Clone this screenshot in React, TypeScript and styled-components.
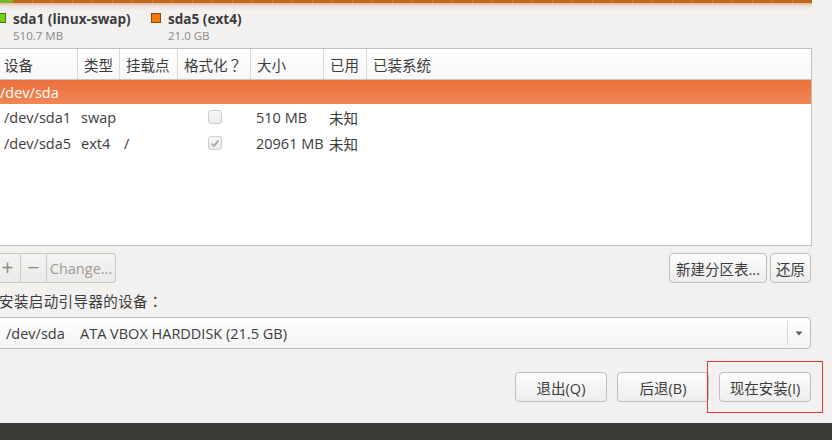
import React from "react";
import styled, { createGlobalStyle, css } from "styled-components";

const Global = createGlobalStyle`
  html, body { margin: 0; padding: 0; background: #f2f1f0; }
  body {
    font-family: "Open Sans", "Noto Sans CJK SC", sans-serif;
    font-size: 14.5px;
    color: #3c3c3c;
  }
  * { box-sizing: border-box; }
`;

const Page = styled.div`
  position: relative;
  width: 832px;
  height: 440px;
  overflow: hidden;
  display: flex;
  flex-direction: column;
  background: #f2f1f0;
`;

const Main = styled.div`
  flex: 1;
  display: flex;
  flex-direction: column;
  margin-left: -3px;
  width: 815px;
`;

const PartitionBar = styled.div`
  height: 11px;
  display: flex;
  width: 815px;
`;

const Segment = styled.div<{ $color: string; $width?: number }>`
  height: 11px;
  ${(p) => (p.$width ? css`width: ${p.$width}px;` : css`flex: 1;`)}
  background:
    repeating-linear-gradient(
      to right,
      transparent 0,
      transparent 19px,
      rgba(255, 255, 255, 0.16) 19px,
      rgba(255, 255, 255, 0.16) 20px
    ),
    linear-gradient(
      to bottom,
      ${(p) => p.$color} 0,
      ${(p) => p.$color} 3px,
      rgba(214, 150, 95, 0.6) 3px,
      rgba(230, 200, 170, 0.35) 6px,
      rgba(242, 241, 240, 0) 11px
    );
`;

const Legend = styled.div`
  height: 37px;
  display: flex;
  margin-left: -1px;
`;

const LegendItem = styled.div<{ $width?: number }>`
  display: flex;
  gap: 7px;
  ${(p) => p.$width && css`width: ${p.$width}px;`}
`;

const Swatch = styled.div<{ $color: string }>`
  width: 10px;
  height: 10px;
  margin-top: 2px;
  background: ${(p) => p.$color};
  border: 1px solid rgba(60, 40, 20, 0.6);
`;

const LegendText = styled.div`
  display: flex;
  flex-direction: column;
`;

const LegendName = styled.span`
  font-weight: 700;
  font-size: 13.6px;
  line-height: 16px;
  color: #3c3c3c;
`;

const LegendSize = styled.span`
  font-size: 11.5px;
  line-height: 18px;
  color: #8a8886;
`;

const Punct = styled.span`
  font-family: "Noto Sans CJK JP", "Noto Sans CJK SC", sans-serif;
`;

const Table = styled.div`
  height: 198px;
  background: #fff;
  border: 1px solid #c3c0bc;
  display: flex;
  flex-direction: column;
`;

const cols = "80px 42px 58px 73px 73px 43px 1fr";

const HeaderRow = styled.div`
  display: grid;
  grid-template-columns: ${cols};
  height: 31px;
  background: linear-gradient(to bottom, #ffffff, #f7f7f7);
  border-bottom: 1px solid #c8c5c1;
`;

const HeaderCell = styled.div<{ $last?: boolean }>`
  display: flex;
  align-items: center;
  padding-left: 6px;
  color: #3c3c3c;
  white-space: nowrap;
  overflow: hidden;
  border-right: ${(p) => (p.$last ? "none" : "1px solid #dcd9d5")};
`;

const DiskRow = styled.div`
  height: 24px;
  display: flex;
  align-items: center;
  padding-left: 2px;
  color: #fff;
  background: linear-gradient(to bottom, #e9703b, #f18655);
`;

const Row = styled.div`
  display: grid;
  grid-template-columns: ${cols};
  height: 26px;
  align-items: center;
`;

const Cell = styled.div<{ $pad?: number; $center?: boolean }>`
  padding-left: ${(p) => p.$pad ?? 5}px;
  color: #3c3c3c;
  white-space: nowrap;
  ${(p) =>
    p.$center &&
    css`
      display: flex;
      justify-content: center;
      padding-left: 1px;
    `}
`;

const CheckBox = styled.div`
  width: 14px;
  height: 14px;
  border: 1px solid #cfcdca;
  border-radius: 3px;
  background: linear-gradient(to bottom, #f7f7f7, #ebebeb);
  display: flex;
  align-items: center;
  justify-content: center;
`;

const ToolRow = styled.div`
  display: flex;
  align-items: center;
  margin-top: 7px;
  height: 30px;
`;

const Group = styled.div`
  display: flex;
  margin-left: -3px;
`;

const buttonBase = css`
  height: 30px;
  display: flex;
  align-items: center;
  justify-content: center;
  border: 1px solid #c2bfbb;
  border-radius: 4px;
  background: linear-gradient(to bottom, #fcfcfc, #ededed);
  font-family: inherit;
  color: #3c3c3c;
  padding: 0;
  white-space: nowrap;
`;

const GroupButton = styled.div<{ $width: number; $pos: "first" | "mid" | "last"; $big?: boolean }>`
  ${buttonBase}
  width: ${(p) => p.$width}px;
  color: #9d9b98;
  background: linear-gradient(to bottom, #f5f4f3, #eceae8);
  border-color: #cdcac6;
  border-radius: ${(p) =>
    p.$pos === "first" ? "4px 0 0 4px" : p.$pos === "last" ? "0 4px 4px 0" : "0"};
  ${(p) => p.$pos !== "first" && css`border-left: none;`}
  ${(p) =>
    p.$big &&
    css`
      font-size: 21px;
      color: #8e8c89;
      padding-bottom: 2px;
    `}
`;

const Spacer = styled.div`
  flex: 1;
`;

const Button = styled.div<{ $width: number }>`
  ${buttonBase}
  width: ${(p) => p.$width}px;
`;

const RightGroup = styled.div`
  display: flex;
  gap: 3px;
  margin-right: 1px;
`;

const Label = styled.div`
  margin-top: 9px;
  height: 18px;
  line-height: 18px;
  padding-left: 2px;
  color: #3c3c3c;
  letter-spacing: 0.4px;
`;

const Combo = styled.div`
  margin-top: 7px;
  margin-right: 1px;
  height: 32px;
  display: flex;
  align-items: center;
  border: 1px solid #bfbbb6;
  border-radius: 4px;
  background: linear-gradient(to bottom, #ffffff, #f3f3f3);
  padding-left: 8px;
`;

const DevName = styled.span`
  width: 74px;
`;

const DiskName = styled.span`
  flex: 1;
`;

const ComboArrow = styled.div`
  width: 22px;
  height: 24px;
  border-left: 1px solid #dad7d3;
  display: flex;
  align-items: center;
  justify-content: center;
  margin-right: 1px;
`;

const BottomRow = styled.div`
  margin-top: 23px;
  display: flex;
  justify-content: flex-end;
  gap: 10px;
  margin-right: 1px;
`;

const DarkBar = styled.div`
  height: 17px;
  background: #3c3b37;
`;

const Highlight = styled.div`
  position: absolute;
  left: 707px;
  top: 361px;
  width: 116px;
  height: 52px;
  border: 1px solid #e5383c;
`;

const Check = () => (
  <svg width="10" height="9" viewBox="0 0 10 9">
    <path d="M1.5 4.5 L4 7 L8.5 1.5" fill="none" stroke="#a3a3a3" strokeWidth="1.6" />
  </svg>
);

const Arrow = () => (
  <svg width="8" height="5" viewBox="0 0 8 5">
    <path d="M0.5 0.5 L7.5 0.5 L4 4.5 Z" fill="#5a5a5a" />
  </svg>
);

export default function App() {
  return (
    <Page>
      <Global />
      <Main>
        <PartitionBar>
          <Segment $color="#7ab52c" $width={16} />
          <Segment $color="#c0691c" />
        </PartitionBar>
        <Legend>
          <LegendItem $width={155}>
            <Swatch $color="#73d216" />
            <LegendText>
              <LegendName>sda1 (linux-swap)</LegendName>
              <LegendSize>510.7 MB</LegendSize>
            </LegendText>
          </LegendItem>
          <LegendItem>
            <Swatch $color="#f57900" />
            <LegendText>
              <LegendName>sda5 (ext4)</LegendName>
              <LegendSize>21.0 GB</LegendSize>
            </LegendText>
          </LegendItem>
        </Legend>
        <Table>
          <HeaderRow>
            <HeaderCell>设备</HeaderCell>
            <HeaderCell>类型</HeaderCell>
            <HeaderCell>挂载点</HeaderCell>
            <HeaderCell>
              格式化<Punct>？</Punct>
            </HeaderCell>
            <HeaderCell>大小</HeaderCell>
            <HeaderCell>已用</HeaderCell>
            <HeaderCell $last>已装系统</HeaderCell>
          </HeaderRow>
          <DiskRow>/dev/sda</DiskRow>
          <Row>
            <Cell $pad={6}>/dev/sda1</Cell>
            <Cell $pad={3}>swap</Cell>
            <Cell $pad={4}></Cell>
            <Cell $center>
              <CheckBox />
            </Cell>
            <Cell>510 MB</Cell>
            <Cell>未知</Cell>
            <Cell></Cell>
          </Row>
          <Row>
            <Cell $pad={6}>/dev/sda5</Cell>
            <Cell $pad={3}>ext4</Cell>
            <Cell $pad={4}>/</Cell>
            <Cell $center>
              <CheckBox>
                <Check />
              </CheckBox>
            </Cell>
            <Cell>20961 MB</Cell>
            <Cell>未知</Cell>
            <Cell></Cell>
          </Row>
        </Table>
        <ToolRow>
          <Group>
            <GroupButton $width={27} $pos="first" $big>+</GroupButton>
            <GroupButton $width={26} $pos="mid" $big>−</GroupButton>
            <GroupButton $width={69} $pos="last">Change...</GroupButton>
          </Group>
          <Spacer />
          <RightGroup>
            <Button $width={98}>新建分区表...</Button>
            <Button $width={41}>还原</Button>
          </RightGroup>
        </ToolRow>
        <Label>
          安装启动引导器的设备<Punct>：</Punct>
        </Label>
        <Combo>
          <DevName>/dev/sda</DevName>
          <DiskName>ATA VBOX HARDDISK (21.5 GB)</DiskName>
          <ComboArrow>
            <Arrow />
          </ComboArrow>
        </Combo>
        <BottomRow>
          <Button $width={92}>退出(Q)</Button>
          <Button $width={92}>后退(B)</Button>
          <Button $width={92}>现在安装(I)</Button>
        </BottomRow>
        <Spacer />
      </Main>
      <DarkBar />
      <Highlight />
    </Page>
  );
}
